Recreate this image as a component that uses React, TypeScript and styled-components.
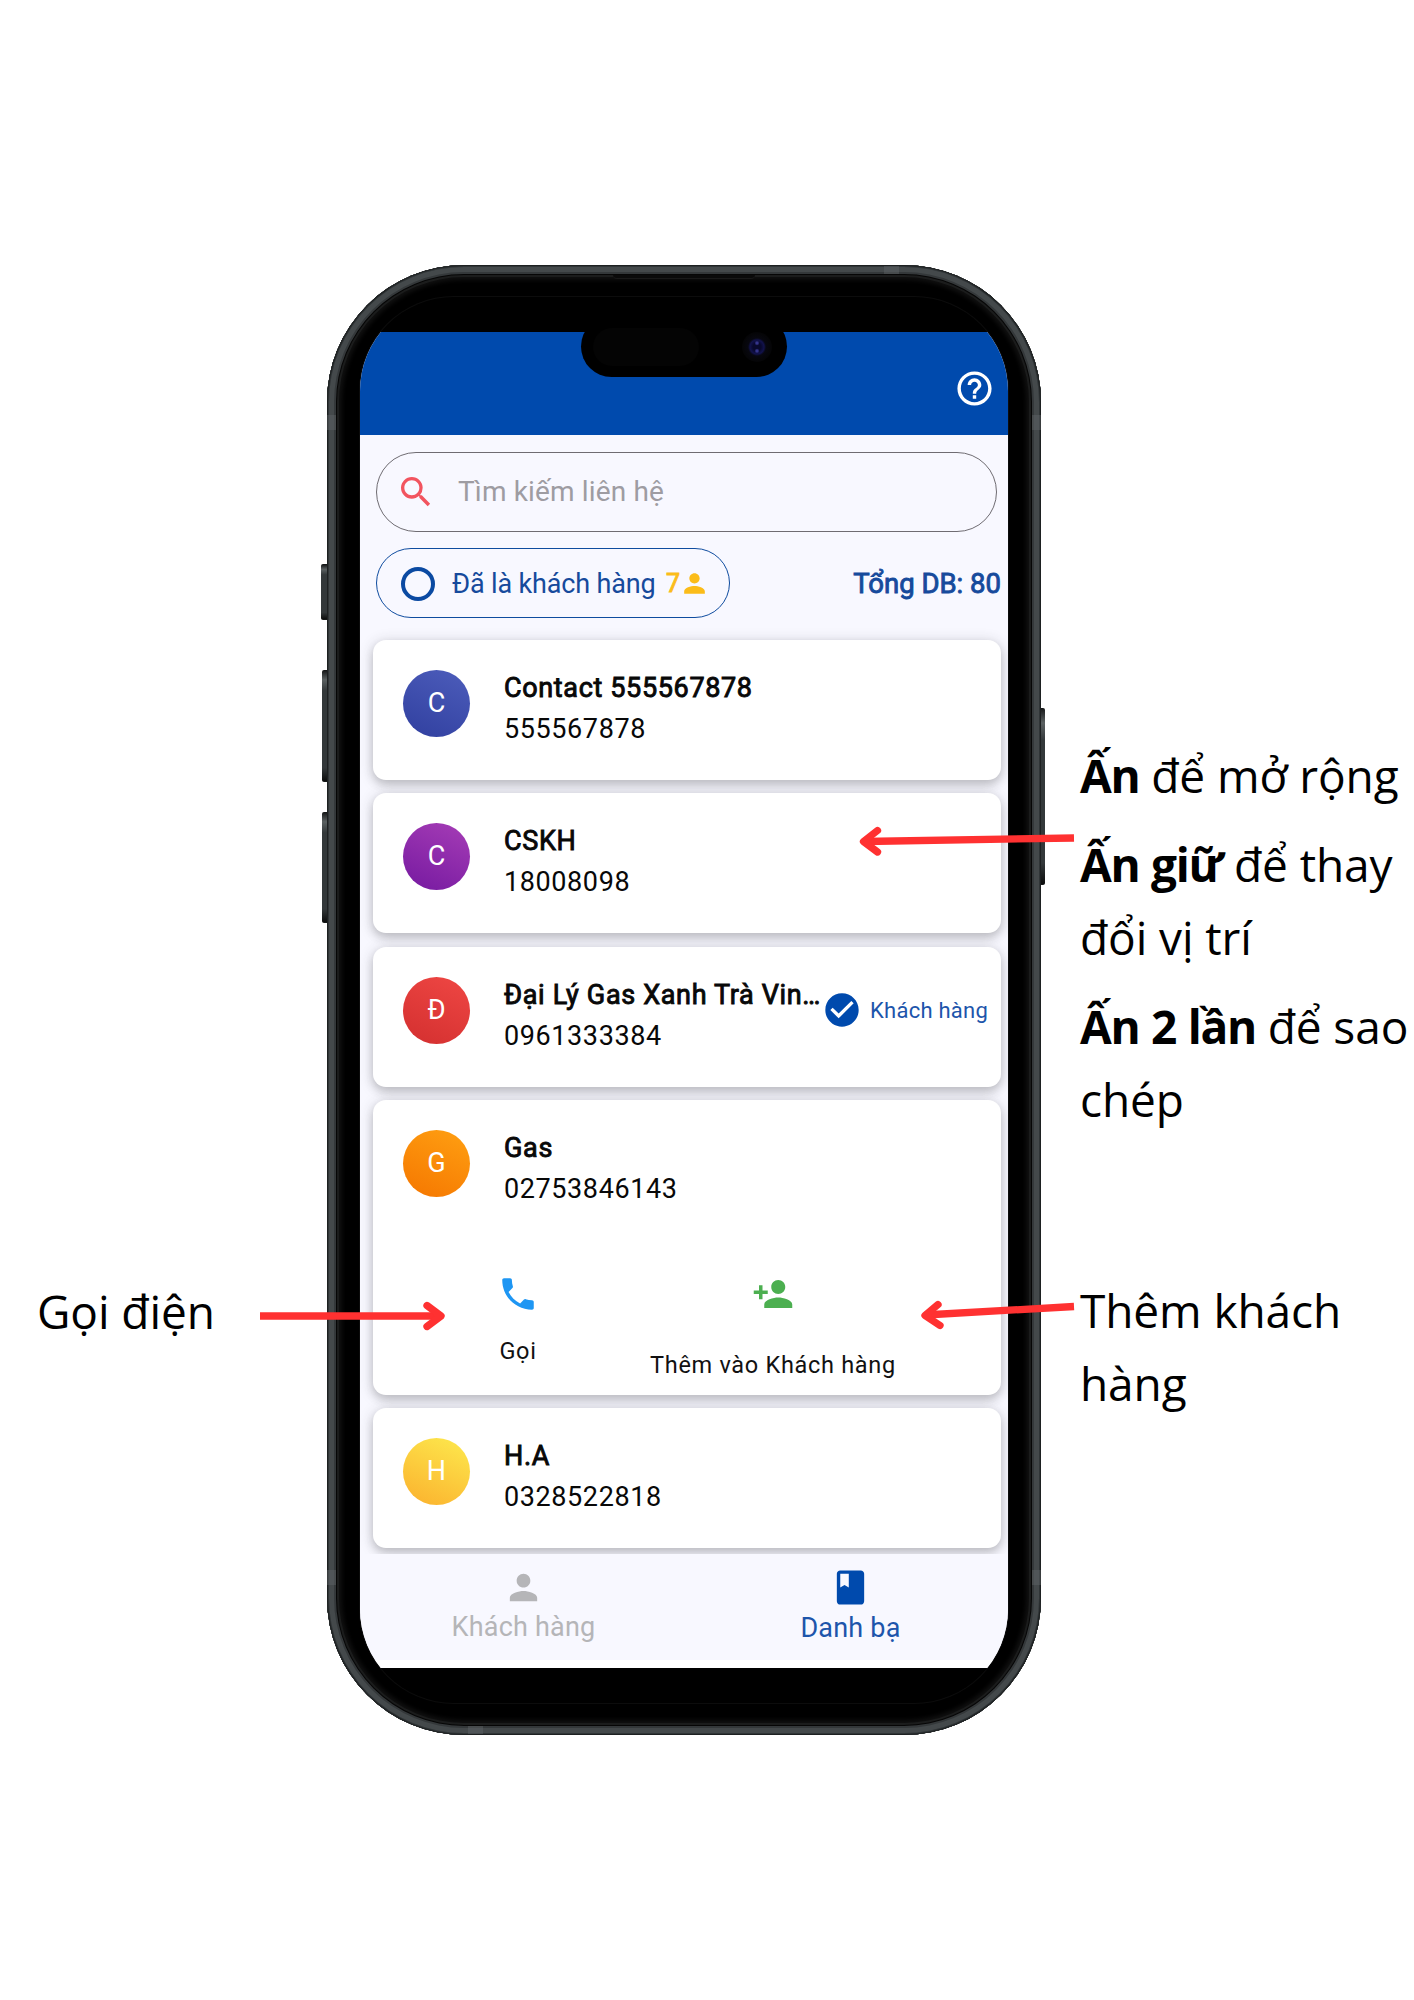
import React from 'react';
import styled, { createGlobalStyle, css } from 'styled-components';
import {
  MdSearch, MdPerson, MdHelpOutline, MdPhone, MdCheckCircle, MdClass, MdPersonAdd,
} from 'react-icons/md';

const Global = createGlobalStyle`
  *{box-sizing:border-box}
  body{margin:0;background:#fff}
`;

const Page = styled.main`
  position: relative;
  width: 1414px;
  height: 2000px;
  overflow: hidden;
  display: grid;
  grid-template-columns: 327px 714px 1fr;
  grid-template-rows: 1470px;
  padding-top: 265px;
  background: #fff;
  font-family: 'Open Sans', sans-serif;
  color: #000;
`;

const NoteColumn = styled.aside<{ $top: number; $left: number }>`
  padding: ${p => p.$top}px 0 0 ${p => p.$left}px;
`;

const Note = styled.p<{ $after?: number }>`
  margin: 0 0 ${p => p.$after ?? 0}px;
  font-size: 46px;
  line-height: 73px;
  letter-spacing: -0.1px;
  white-space: nowrap;

  b {
    letter-spacing: -1.3px;
    word-spacing: 1px;
  }
`;

const Phone = styled.section`
  position: relative;
  height: 1470px;
  padding: 32px 33px;
  border-radius: 137px;
  background: #000;
  box-shadow:
    inset 0 0 0 1px #1d2021,
    inset 0 0 0 2px #303537,
    inset 0 0 0 7px #44494b,
    inset 0 0 0 9px #34383a,
    inset 0 0 0 10px #060606,
    inset 0 0 0 12px #1b1c1c,
    inset 0 0 4px 15px #101010;
`;

const SideKey = styled.span<{ $side: 'left' | 'right'; $top: number; $h: number; $w: number }>`
  position: absolute;
  ${p => p.$side}: -${p => p.$w}px;
  top: ${p => p.$top}px;
  width: ${p => p.$w}px;
  height: ${p => p.$h}px;
  border-radius: ${p => (p.$side === 'left' ? '2px 0 0 2px' : '0 2px 2px 0')};
  background: linear-gradient(#1a1c1d, #5b6162 8%, #33383a 18%, #33383a 88%, #0c0d0d);
  border: 1px solid #161818;
  border-width: 1px 0;
`;

const AntennaBand = styled.span<{ $x: number; $y: number; $w: number; $h: number }>`
  position: absolute;
  left: ${p => p.$x}px;
  top: ${p => p.$y}px;
  width: ${p => p.$w}px;
  height: ${p => p.$h}px;
  background: rgba(100, 106, 108, 0.4);
`;

const Earpiece = styled.span`
  position: absolute;
  left: 286px;
  top: 10px;
  width: 142px;
  height: 4px;
  background: #0a0a0a;
  border-bottom: 1px solid #191919;
  border-radius: 0 0 4px 4px;
`;

const Display = styled.div`
  width: 648px;
  height: 1406px;
  border-radius: 94px;
  overflow: hidden;
  background: #000;
  padding: 35px 0;
  box-shadow: 0 0 0 1px #0c0c0c;
`;

const AppShell = styled.div`
  height: 1336px;
  display: flex;
  flex-direction: column;
  background: #f8f8ff;
  font-family: Roboto, sans-serif;
`;

const AppBar = styled.header`
  flex: none;
  height: 103px;
  display: flex;
  justify-content: flex-end;
  padding: 36px 13.5px 0 0;
  background: #004aad;
  color: #fff;
`;

const Island = styled.div`
  position: absolute;
  left: 254px;
  top: 51px;
  width: 206px;
  height: 61px;
  border-radius: 31px;
  background: #000;
  display: flex;
  align-items: center;
  justify-content: space-between;
  padding: 0 15px 0 12px;
`;

const Sensor = styled.i`
  width: 106px;
  height: 38px;
  border-radius: 19px;
  background: #040404;
`;

const Lens = styled.i`
  width: 30px;
  height: 30px;
  border-radius: 50%;
  background:
    radial-gradient(circle at 50% 37%, #34348c 0 1px, transparent 2.5px),
    radial-gradient(circle at 50% 63%, #34348c 0 1px, transparent 2.5px),
    radial-gradient(circle at 50% 50%, #08082c 0 4px, #12124c 7px, #07070f 9px, #050507 14px);
`;

/* Regular cut thickened by a stroke, so the advance widths stay those of the regular weight. */
const heavy = css`
  font-weight: 400;
  -webkit-text-stroke: 0.9px currentColor;
`;

const SearchBox = styled.div`
  flex: none;
  height: 80px;
  margin: 17px 11px 0 16px;
  border: 1px solid #6f6c72;
  border-radius: 40px;
  display: flex;
  align-items: center;
  padding: 0 0 1px 19px;
  gap: 22px;
  color: #9e9ca2;
  font-size: 28px;
  letter-spacing: 0.15px;
`;

const FilterRow = styled.div`
  flex: none;
  height: 70px;
  margin: 16px 7px 0 16px;
  display: flex;
  align-items: center;
  justify-content: space-between;
`;

const FilterPill = styled.div`
  width: 354px;
  height: 70px;
  border: 1px solid #0f4c9f;
  border-radius: 35px;
  display: flex;
  align-items: center;
  padding: 1px 0 0 24px;
  color: #164a9c;
  font-size: 27px;
  white-space: nowrap;
`;

const RadioRing = styled.i`
  width: 34px;
  height: 34px;
  margin-right: 17px;
  border: 4px solid #0b4aa2;
  border-radius: 50%;
`;

const FilterLabel = styled.span`
  width: 203px;
  letter-spacing: -0.15px;
`;

const Count = styled.b`
  margin-left: 11px;
  color: #fbbc1a;
  font-size: 25px;
  display: flex;
  align-items: center;
  ${heavy}

  svg {
    margin-left: -1px;
    stroke: none;
  }
`;

const Total = styled.b`
  padding-top: 1px;
  font-size: 27.5px;
  color: #164a9c;
  white-space: nowrap;
  ${heavy}
`;

const List = styled.div`
  flex: 1;
  min-height: 0;
  overflow: hidden;
  margin-top: 8px;
  padding: 14px 7px 0 13px;
  display: flex;
  flex-direction: column;
  gap: 13.4px;
`;

const Card = styled.article<{ $tall?: boolean }>`
  flex: none;
  height: ${p => (p.$tall ? 294.6 : 140)}px;
  border-radius: 13px;
  background: #fff;
  box-shadow: 0 5px 8px rgba(50, 50, 50, 0.17), 0 2px 14px rgba(50, 50, 55, 0.22);
`;

const CardHead = styled.div`
  display: flex;
  padding: 30px 0 0 30px;
`;

const Avatar = styled.div<{ $from: string; $to: string }>`
  flex: none;
  width: 67px;
  height: 67px;
  border-radius: 50%;
  background: linear-gradient(205deg, ${p => p.$from}, ${p => p.$to});
  color: #fff;
  font-size: 27px;
  line-height: 66px;
  text-align: center;
`;

const Identity = styled.div`
  flex: none;
  width: 318px;
  margin-left: 34px;
  white-space: nowrap;
  color: #080808;
`;

const Name = styled.div`
  font-size: 27px;
  line-height: 37px;
  letter-spacing: 0.65px;
  ${heavy}
`;

const Digits = styled.div`
  margin-top: 4px;
  font-size: 27px;
  line-height: 37px;
  letter-spacing: 0.6px;
`;

const CustomerTag = styled.div`
  height: 67px;
  display: flex;
  align-items: center;
  gap: 8px;
  color: #1d55ab;
  font-size: 22px;
  letter-spacing: 0.25px;
  white-space: nowrap;
`;

const Actions = styled.div`
  display: flex;
  margin-top: 65px;
`;

const Action = styled.div<{ $w: number; $gap: number }>`
  width: ${p => p.$w}px;
  display: flex;
  flex-direction: column;
  align-items: center;
  gap: ${p => p.$gap}px;
  font-size: 23.5px;
  line-height: 30px;
  letter-spacing: 0.7px;
  white-space: nowrap;
  color: #111;
`;

const TabBar = styled.nav`
  flex: none;
  height: 114px;
  display: flex;
  background: linear-gradient(#f8f8ff 106px, #fff 106px);
`;

const Tab = styled.div<{ $on?: boolean }>`
  flex: none;
  width: 327px;
  padding-top: 13px;
  display: flex;
  flex-direction: column;
  align-items: center;
  gap: ${p => (p.$on ? 2 : 1)}px;
  font-size: 27px;
  line-height: 36px;
  letter-spacing: 0.2px;
  color: ${p => (p.$on ? '#1d55ab' : '#b5b5b8')};
`;

const Arrows = styled.svg`
  position: absolute;
  inset: 0;
  pointer-events: none;
`;

type Contact = { initial: string; name: string; phone: string; from: string; to: string; customer?: boolean; open?: boolean };

const contacts: Contact[] = [
  { initial: 'C', name: 'Contact 555567878', phone: '555567878', from: '#4d5dbb', to: '#303f9f' },
  { initial: 'C', name: 'CSKH', phone: '18008098', from: '#a63db6', to: '#7519a0' },
  { initial: 'Đ', name: 'Đại Lý Gas Xanh Trà Vin…', phone: '0961333384', from: '#ef4744', to: '#d32f2f', customer: true },
  { initial: 'G', name: 'Gas', phone: '02753846143', from: '#ffa012', to: '#f57600', open: true },
  { initial: 'H', name: 'H.A', phone: '0328522818', from: '#fdea4e', to: '#fbb02d' },
];

function ContactCard({ c }: { c: Contact }) {
  return (
    <Card $tall={c.open}>
      <CardHead>
        <Avatar $from={c.from} $to={c.to}>{c.initial}</Avatar>
        <Identity>
          <Name>{c.name}</Name>
          <Digits>{c.phone}</Digits>
        </Identity>
        {c.customer && (
          <CustomerTag>
            <MdCheckCircle size={40} color="#004aad" />
            Khách hàng
          </CustomerTag>
        )}
      </CardHead>
      {c.open && (
        <Actions>
          <Action $w={290} $gap={21}>
            <MdPhone size={42} color="#1e96f3" />
            Gọi
          </Action>
          <Action $w={220} $gap={35}>
            <MdPersonAdd size={42} color="#4caf50" />
            Thêm vào Khách hàng
          </Action>
        </Actions>
      )}
    </Card>
  );
}

export default function App() {
  return (
    <Page>
      <Global />
      <NoteColumn $top={1010} $left={37}>
        <Note>Gọi điện</Note>
      </NoteColumn>
      <Phone>
        <SideKey $side="left" $top={299} $h={56} $w={6} />
        <SideKey $side="left" $top={405} $h={112} $w={5} />
        <SideKey $side="left" $top={547} $h={111} $w={5} />
        <SideKey $side="right" $top={443} $h={177} $w={4} />
        <AntennaBand $x={0} $y={150} $w={9} $h={15} />
        <AntennaBand $x={705} $y={150} $w={9} $h={15} />
        <AntennaBand $x={0} $y={1305} $w={9} $h={15} />
        <AntennaBand $x={705} $y={1305} $w={9} $h={15} />
        <AntennaBand $x={557} $y={1} $w={15} $h={8} />
        <AntennaBand $x={141} $y={1461} $w={15} $h={8} />
        <Earpiece />
        <Display>
          <AppShell>
            <AppBar><MdHelpOutline size={41} /></AppBar>
            <SearchBox><MdSearch size={40} color="#f2545f" />Tìm kiếm liên hệ</SearchBox>
            <FilterRow>
              <FilterPill>
                <RadioRing />
                <FilterLabel>Đã là khách hàng</FilterLabel>
                <Count>7<MdPerson size={31} /></Count>
              </FilterPill>
              <Total>Tổng DB: 80</Total>
            </FilterRow>
            <List>
              {contacts.map(c => <ContactCard key={c.name} c={c} />)}
            </List>
            <TabBar>
              <Tab><MdPerson size={41} />Khách hàng</Tab>
              <Tab $on><MdClass size={41} color="#004aad" />Danh bạ</Tab>
            </TabBar>
          </AppShell>
        </Display>
        <Island><Sensor /><Lens /></Island>
      </Phone>
      <NoteColumn $top={474} $left={39}>
        <Note $after={16}><b>Ấn</b> để mở rộng</Note>
        <Note $after={16}><b>Ấn giữ</b> để thay<br />đổi vị trí</Note>
        <Note $after={138}><b>Ấn 2 lần</b> để sao<br />chép</Note>
        <Note>Thêm khách<br />hàng</Note>
      </NoteColumn>
      <Arrows width="1414" height="2000" viewBox="0 0 1414 2000" fill="none" stroke="#ff3131" strokeWidth="7.3" strokeLinejoin="round">
        <path d="M1074 838 L864 841.5" />
        <path d="M877.500 830.500 L863.500 841.500 L877.500 852" strokeLinecap="round" />
        <path d="M1074 1306.500 L925 1315" />
        <path d="M938 1304.500 L925 1315.500 L940 1325.500" strokeLinecap="round" />
        <path d="M260 1316 L440 1316" />
        <path d="M427 1305.500 L441 1316 L427 1326.500" strokeLinecap="round" />
      </Arrows>
    </Page>
  );
}
